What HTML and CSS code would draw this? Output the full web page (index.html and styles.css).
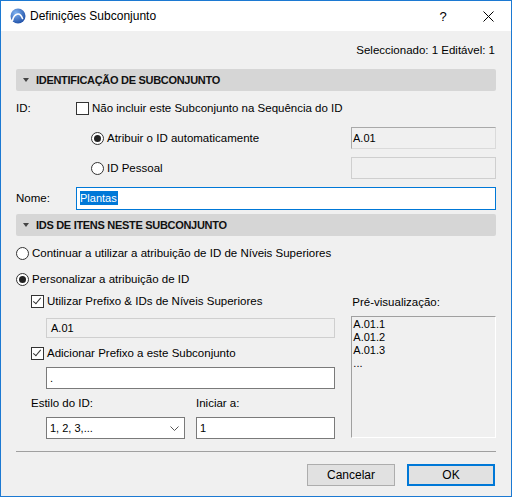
FILE: index.html
```html
<!DOCTYPE html>
<html>
<head>
<meta charset="utf-8">
<link rel="stylesheet" href="styles.css">
</head>
<body>
<div class="window">
  <div class="titlebar">
    <svg class="appicon" width="16" height="16" viewBox="0 0 16 16">
      <defs>
        <radialGradient id="g" cx="0.35" cy="0.3" r="0.8">
          <stop offset="0" stop-color="#7fb2f0"/>
          <stop offset="1" stop-color="#1a4aa3"/>
        </radialGradient>
      </defs>
      <circle cx="8" cy="8" r="7.5" fill="url(#g)"/>
      <path d="M2.5 12.5 C4 6 9.5 3 12.5 10.5" fill="none" stroke="#fff" stroke-width="1.6" stroke-linecap="round"/>
    </svg>
    <span class="title">Definições Subconjunto</span>
    <span class="help">?</span>
    <span class="close">
      <svg width="11" height="11" viewBox="0 0 11 11"><path d="M0.5 0.5 L10.5 10.5 M10.5 0.5 L0.5 10.5" stroke="#000" stroke-width="1"/></svg>
    </span>
  </div>
  <div class="content">
    <div class="status">Seleccionado: 1 Editável: 1</div>

    <div class="section s1"><span class="tri"></span>IDENTIFICAÇÃO DE SUBCONJUNTO</div>

    <div class="row r30">
      <span class="lbl">ID:</span>
      <span class="check"></span>
      <span class="txt">Não incluir este Subconjunto na Sequência do ID</span>
    </div>
    <div class="row r30 ind75">
      <span class="radio on"></span>
      <span class="txt">Atribuir o ID automaticamente</span>
      <div class="field ro dark">A.01</div>
    </div>
    <div class="row r30 ind75">
      <span class="radio"></span>
      <span class="txt">ID Pessoal</span>
      <div class="field ro light"></div>
    </div>
    <div class="row r30">
      <span class="lbl">Nome:</span>
      <div class="field name"><span class="sel">Plantas</span></div>
    </div>

    <div class="section s2"><span class="tri"></span>IDS DE ITENS NESTE SUBCONJUNTO</div>

    <div class="row r26 first">
      <span class="radio"></span>
      <span class="txt">Continuar a utilizar a atribuição de ID de Níveis Superiores</span>
    </div>
    <div class="row r26">
      <span class="radio on"></span>
      <span class="txt">Personalizar a atribuição de ID</span>
    </div>

    <div class="cols">
      <div class="left">
        <div class="row r18">
          <span class="check on"></span>
          <span class="txt">Utilizar Prefixo &amp; IDs de Níveis Superiores</span>
        </div>
        <div class="field ro light f1">A.01</div>
        <div class="row r18 m6">
          <span class="check on"></span>
          <span class="txt">Adicionar Prefixo a este Subconjunto</span>
        </div>
        <div class="field white f2 in15">.</div>
        <div class="pair">
          <div class="sub">
            <div class="row r18 m5"><span class="txt">Estilo do ID:</span></div>
            <div class="field white f3 in15 combo"><span>1, 2, 3,...</span>
              <svg width="9" height="5" viewBox="0 0 9 5"><path d="M0.5 0.5 L4.5 4.5 L8.5 0.5" fill="none" stroke="#555" stroke-width="1"/></svg>
            </div>
          </div>
          <div class="sub right">
            <div class="row r18 m5"><span class="txt">Iniciar a:</span></div>
            <div class="field white f3">1</div>
          </div>
        </div>
      </div>
      <div class="preview">
        <div class="plabel">Pré-visualização:</div>
        <div class="plist">
          <div>A.01.1</div>
          <div>A.01.2</div>
          <div>A.01.3</div>
          <div>...</div>
        </div>
      </div>
    </div>

    <div class="sep"></div>

    <div class="buttons">
      <button class="btn">Cancelar</button>
      <button class="btn ok">OK</button>
    </div>
  </div>
</div>
</body>
</html>
```

FILE: styles.css
```css
body {
  margin: 0;
  font-family: "Liberation Sans", Arial, sans-serif;
  font-size: 11.5px;
  color: #000;
}

.window {
  width: 512px;
  height: 497px;
  box-sizing: border-box;
  border: 1px solid #1c79d2;
  background: #f0f0f0;
  display: flex;
  flex-direction: column;
  overflow: hidden;
}

.titlebar {
  height: 30px;
  flex-shrink: 0;
  background: #fff;
  display: flex;
  align-items: center;
}

.appicon {
  margin-left: 9px;
  flex-shrink: 0;
}

.title {
  margin-left: 4px;
  font-size: 12px;
  color: #000;
}

.help {
  margin-left: auto;
  width: 46px;
  text-align: center;
  font-size: 13px;
}

.close {
  width: 45px;
  display: flex;
  justify-content: center;
  align-items: center;
}

.content {
  flex: 1;
  padding: 0 15px;
  display: flex;
  flex-direction: column;
}

.status {
  height: 38px;
  display: flex;
  align-items: center;
  justify-content: flex-end;
  padding-right: 1px;
}

.section {
  height: 22px;
  flex-shrink: 0;
  background: #d6d6d6;
  border-radius: 2px;
  display: flex;
  align-items: center;
  padding-left: 7px;
  font-weight: bold;
  font-size: 11px;
  letter-spacing: -0.3px;
  color: #111;
}

.tri {
  width: 0;
  height: 0;
  border-left: 3px solid transparent;
  border-right: 3px solid transparent;
  border-top: 4px solid #444;
  margin-right: 7px;
}

.s1 { margin-bottom: 2px; }
.s2 { margin-top: 1px; }

.row {
  display: flex;
  align-items: center;
  flex-shrink: 0;
}

.r30 { height: 30px; }
.r26 { height: 26px; }
.r18 { height: 18px; }
.first { margin-top: 4px; }
.m6 { margin-top: 6px; }
.m5 { margin-top: 5px; }

.ind75 { padding-left: 75px; }

.lbl {
  width: 60px;
  flex-shrink: 0;
}

.txt {
  margin-left: 3px;
  white-space: nowrap;
}

.check {
  width: 11px;
  height: 11px;
  border: 1px solid #333;
  background: #fff;
  flex-shrink: 0;
  position: relative;
}

.check.on::after {
  content: "";
  position: absolute;
  left: 3px;
  top: 0px;
  width: 3px;
  height: 7px;
  border-right: 1.3px solid #333;
  border-bottom: 1.3px solid #333;
  transform: rotate(40deg);
}

.radio {
  width: 11px;
  height: 11px;
  border: 1px solid #333;
  border-radius: 50%;
  background: #fff;
  flex-shrink: 0;
  display: flex;
  align-items: center;
  justify-content: center;
}

.radio.on::after {
  content: "";
  width: 7px;
  height: 7px;
  border-radius: 50%;
  background: #222;
}

.field {
  box-sizing: border-box;
  font-size: 11px;
  display: flex;
  align-items: center;
  flex-shrink: 0;
}

.field.ro {
  background: #f0f0f0;
  margin-left: auto;
  width: 145px;
  height: 22px;
  padding-left: 1px;
}

.field.dark {
  border: 1px solid;
  border-color: #a9a9a9 #dadada #dadada #a9a9a9;
}

.field.light {
  border: 1px solid #cfcfcf;
}

.field.name {
  width: 420px;
  height: 23px;
  border: 1px solid #0078d7;
  background: #fff;
  padding-left: 3px;
}

.sel {
  background: #0078d7;
  color: #fff;
  line-height: 14px;
  padding: 0 1px 0 0;
}

.cols {
  display: flex;
  flex-shrink: 0;
}

.left {
  width: 320px;
  padding-left: 15px;
  box-sizing: border-box;
  display: flex;
  flex-direction: column;
}

.in15 { margin-left: 15px; }

.field.f1 {
  margin-left: 15px;
  width: 289px;
  height: 20px;
  margin-top: 8px;
  padding-left: 4px;
}

.field.white {
  background: #fff;
  border: 1px solid #7a7a7a;
  padding-left: 3px;
}

.field.f2 {
  width: 289px;
  height: 22px;
  margin-top: 5px;
}

.pair {
  display: flex;
}

.sub {
  display: flex;
  flex-direction: column;
}

.sub .txt { margin-left: 0; }

.sub.right {
  margin-left: 11px;
}

.field.f3 {
  width: 139px;
  height: 22px;
  margin-top: 5px;
}

.combo {
  justify-content: space-between;
  padding-right: 5px;
}

.preview {
  margin-left: 16px;
  width: 145px;
  display: flex;
  flex-direction: column;
}

.plabel {
  height: 20px;
  display: flex;
  align-items: center;
  padding-left: 1px;
}

.plist {
  margin-top: 4px;
  height: 122px;
  box-sizing: border-box;
  border: 1px solid;
  border-color: #a0a0a0 #ffffff #ffffff #a0a0a0;
  background: #f0f0f0;
  font-size: 11px;
  line-height: 13px;
  padding: 1px 1px;
}

.sep {
  margin-top: 12px;
  height: 1px;
  background: #a0a0a0;
  flex-shrink: 0;
}

.buttons {
  margin-top: 12px;
  display: flex;
  justify-content: flex-end;
  gap: 12px;
  padding-right: 1px;
}

.btn {
  width: 88px;
  height: 22px;
  box-sizing: border-box;
  background: #e1e1e1;
  border: 1px solid #adadad;
  font-family: "Liberation Sans", Arial, sans-serif;
  font-size: 12px;
  color: #000;
  padding: 0;
}

.btn.ok {
  border: 2px solid #0078d7;
}
```
